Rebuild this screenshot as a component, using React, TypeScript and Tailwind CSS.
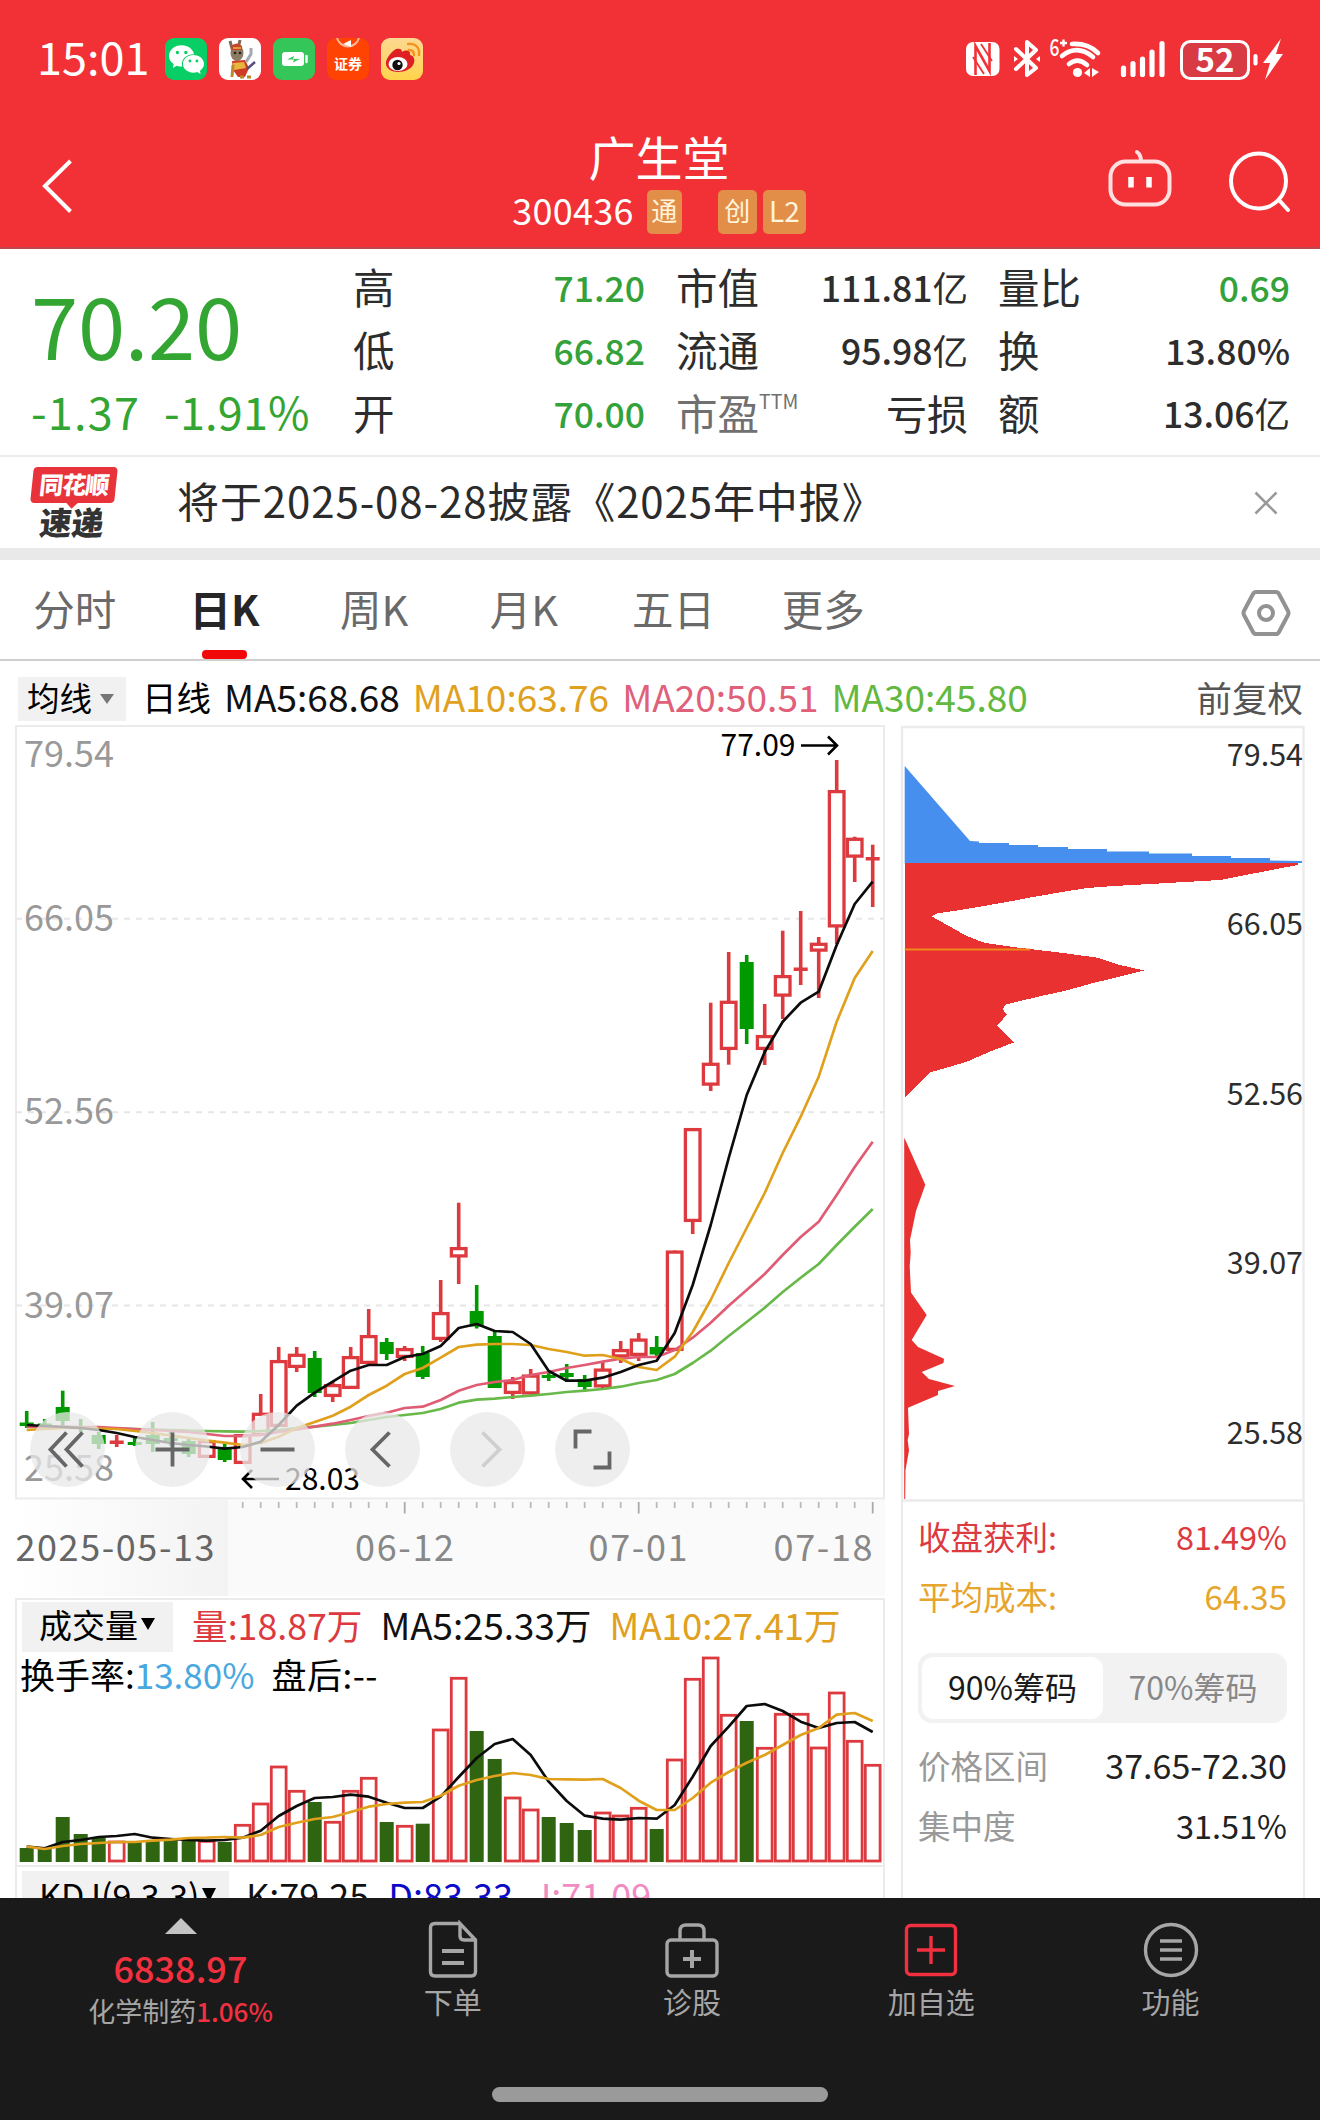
import type { ReactNode } from "react";
import { IoLogoWechat } from "react-icons/io5";

// [type, high, bodyTop, bodyBottom, low] in chart units, r = up, g = down
type Candle = ["r" | "g", number, number, number, number];

const X0 = 26.7;
const STEP = 18;
const cx = (i: number) => X0 + STEP * i;

const candles: Candle[] = [
  ["g", 1411, 1422.5, 1426, 1428],
  ["g", 1419, 1423.5, 1426.5, 1428],
  ["g", 1390.7, 1407, 1421, 1427],
  ["g", 1419, 1426, 1429, 1432],
  ["g", 1432, 1435, 1444, 1449],
  ["r", 1435, 1441.5, 1443, 1447],
  ["g", 1437, 1442, 1445, 1446],
  ["g", 1422, 1435, 1444, 1452],
  ["g", 1432, 1438, 1441, 1446],
  ["g", 1438, 1441, 1454, 1457],
  ["r", 1440, 1440, 1458, 1458],
  ["g", 1443, 1447, 1460, 1462],
  ["r", 1434, 1434, 1464, 1464],
  ["r", 1394, 1412.7, 1436, 1436],
  ["r", 1347, 1360, 1427, 1427],
  ["r", 1347, 1353.7, 1368, 1372],
  ["g", 1351, 1358, 1393, 1397],
  ["r", 1382, 1384, 1397, 1402],
  ["r", 1347, 1356, 1389, 1389],
  ["r", 1309, 1335, 1364, 1364],
  ["g", 1338, 1342, 1354, 1360],
  ["r", 1346, 1348, 1358, 1361],
  ["g", 1346, 1353, 1377, 1379],
  ["r", 1280, 1312, 1340, 1342],
  ["r", 1202.7, 1247, 1257.5, 1284],
  ["g", 1285, 1311, 1326.5, 1328.5],
  ["g", 1332, 1336, 1388, 1388],
  ["r", 1377, 1381, 1394, 1399],
  ["r", 1369, 1374.5, 1394.5, 1394.5],
  ["g", 1371, 1375, 1378, 1381],
  ["g", 1364, 1373, 1377, 1382],
  ["g", 1375, 1379, 1387, 1390],
  ["r", 1362, 1368.5, 1387.5, 1389],
  ["r", 1341, 1349, 1357.5, 1363],
  ["r", 1333, 1338.5, 1356, 1361],
  ["g", 1336, 1347, 1354.5, 1356],
  ["r", 1250.5, 1250.5, 1351, 1351],
  ["r", 1128, 1128, 1222, 1234],
  ["r", 1002.7, 1062.7, 1085.7, 1091],
  ["r", 952, 1000.7, 1050, 1064.7],
  ["g", 955, 962, 1029, 1044],
  ["r", 1004, 1035, 1050, 1065],
  ["r", 930.7, 975, 996.7, 1019],
  ["r", 911, 968.5, 970, 985],
  ["r", 937, 942.7, 951.7, 998],
  ["r", 760, 790, 927.5, 944],
  ["r", 836.7, 837.7, 857.7, 882],
  ["r", 844.7, 858, 859.5, 907],
];

const ma5 = [
  1425, 1426, 1427, 1428, 1430, 1433, 1437, 1440, 1443, 1445, 1446.5, 1448.7, 1447, 1441.7, 1425, 1405.7,
  1392.7, 1381.7, 1370.7, 1365, 1365, 1357, 1354, 1346, 1328, 1324, 1331, 1332, 1344, 1371, 1380.7, 1380.7,
  1377.7, 1372, 1365, 1360.7, 1333, 1285, 1225, 1158, 1095, 1052, 1021.7, 1002.7, 991.7, 945, 904, 881.7,
];
const ma10 = [
  1430, 1429, 1428, 1428, 1428.5, 1429, 1431, 1433, 1435.5, 1438, 1440.7, 1442.7, 1445, 1443, 1436.7, 1428,
  1422, 1415.7, 1406.7, 1395, 1385.7, 1374, 1368, 1357.7, 1347, 1344.7, 1344, 1344, 1345, 1349, 1352, 1355.7,
  1355, 1359, 1367, 1370, 1356.7, 1332, 1300, 1263, 1228, 1193, 1153, 1116.7, 1076.7, 1021.7, 978, 951,
];
const ma20 = [
  1426.7, 1426.7, 1426.7, 1427, 1427, 1428, 1429, 1430, 1431, 1432, 1434, 1436, 1436, 1435, 1432, 1429.3,
  1426.7, 1423.7, 1420, 1416, 1412.7, 1408, 1406.7, 1400, 1390.7, 1385, 1382, 1380, 1375, 1372, 1368, 1365,
  1361.7, 1358.7, 1357, 1357, 1350, 1337.7, 1322.7, 1305.7, 1290, 1274, 1255, 1237, 1221.7, 1195, 1167, 1141.7,
];
const ma30 = [
  1427, 1427, 1427.3, 1427.6, 1428, 1428.5, 1429, 1429.5, 1430, 1430.7, 1431, 1431.4, 1431.7, 1431, 1430, 1428,
  1426.7, 1425, 1423, 1420, 1417, 1415, 1413, 1409, 1402.7, 1399.7, 1398.7, 1397, 1395.7, 1394, 1392, 1390.7,
  1389, 1386.7, 1383, 1380, 1374, 1363, 1350.7, 1336, 1322, 1307.7, 1292, 1277.7, 1264, 1245, 1226.7, 1209,
];

const volumeTops = [
  1848, 1849, 1817, 1834, 1838, 1840.7, 1841, 1841, 1840, 1841, 1840, 1842, 1824, 1802.7, 1765.7, 1790,
  1802, 1821, 1790, 1777, 1822, 1825, 1823.7, 1728.7, 1677, 1731, 1759, 1796.7, 1808.7, 1817, 1823, 1830,
  1811.7, 1814.7, 1807, 1829, 1758.7, 1678, 1656.7, 1714, 1721, 1747, 1713, 1713, 1746.7, 1691.7, 1740, 1764,
];
const volMa5 = [
  1846.7, 1848.3, 1842, 1840, 1837, 1836, 1834, 1837.7, 1839, 1840, 1840.7, 1840, 1837.7, 1830.7, 1816, 1806,
  1798, 1797, 1794.7, 1796.7, 1802.7, 1808, 1808, 1796.7, 1777, 1758, 1744, 1739, 1755, 1781.7, 1801, 1815.7,
  1818.7, 1819.7, 1818, 1818.7, 1805, 1776.7, 1746, 1726.7, 1706, 1704, 1711, 1721.7, 1728, 1723, 1722, 1732,
];
const volMa10 = [
  1846.7, 1849, 1846, 1844, 1843, 1842, 1842, 1840.7, 1839.7, 1838, 1837.7, 1837, 1837.7, 1835, 1827, 1822.7,
  1819, 1817, 1812, 1806.7, 1804, 1802.7, 1802, 1795.7, 1785.7, 1780, 1776, 1773, 1775, 1779, 1779.3, 1779.7,
  1779, 1788, 1800.7, 1810, 1810, 1798, 1782.7, 1772, 1762.7, 1755, 1745, 1735, 1728, 1714.7, 1713, 1721,
];

const line = (ys: number[]) => ys.map((y, i) => `${cx(i).toFixed(1)},${y}`).join(" ");

const RED = "#dc3a3f";
const GREEN = "#009a00";

function StatusBar() {
  return (
    <div className="flex h-[118px] items-center pl-[37px] pr-[36px] text-white">
      <span className="w-[128px] pb-[7px] text-[45px] leading-none">15:01</span>
      <div className="flex gap-3">
        <div className="flex h-[42px] w-[42px] items-center justify-center rounded-[9px] bg-[#08cf65]">
          <IoLogoWechat className="h-[35px] w-[35px]" />
        </div>
        <svg className="h-[42px] w-[42px] rounded-[9px] bg-white" viewBox="0 0 42 42">
          <path d="M11 3l3 11M21 2l-2 9" stroke="#7c6a58" strokeWidth="3" />
          <ellipse cx="18" cy="15" rx="6.5" ry="8" fill="#8d7a62" />
          <path d="M12 8q6-5 11 0l0 4-10 0z" fill="#c8452c" />
          <path d="M14 10h8" stroke="#e8b63b" strokeWidth="1.500" />
          <circle cx="16" cy="15" r="1.3" fill="#222" />
          <circle cx="21" cy="15" r="1.3" fill="#222" />
          <path d="M13 23l13-1 4 8-4 9h-7l-5-7z" fill="#cf3c25" />
          <path d="M14 25l11-1 2 6-12 2z" fill="#e8b63b" />
          <path d="M27 24l5-8v-6" fill="none" stroke="#a3a8b5" strokeWidth="3" />
          <path d="M28 31l8-7" stroke="#5c4a7a" strokeWidth="2.400" />
          <path d="M14 27l-1 12M21 39h4M28 39h4" stroke="#b98a2c" strokeWidth="3" />
        </svg>
        <svg className="h-[42px] w-[42px] rounded-[9px] bg-[#34c659]" viewBox="0 0 42 42">
          <rect x="9" y="14" width="22" height="14" rx="3" fill="#fff" />
          <path d="M33.500 18v6" stroke="#fff" strokeWidth="2.400" strokeLinecap="round" />
          <path d="M14 21.500l7-3.500-1 3h7l-7 3.500 1-3z" fill="#34c659" />
        </svg>
        <div className="relative flex h-[42px] w-[42px] justify-center overflow-hidden rounded-[9px] bg-[#fe4303]">
          <svg className="absolute left-0 top-0 h-[16px] w-[42px]" viewBox="0 0 42 16" fill="none">
            <path d="M10 0a11.5 12 0 0 0 22 0" stroke="#ffb59a" strokeWidth="2" />
            <path d="M16 6l8-4v7z" fill="#fff" />
          </svg>
          <span className="mt-[18px] text-[14px] font-bold leading-none">证券</span>
        </div>
        <svg className="h-[42px] w-[42px] rounded-[9px] bg-gradient-to-b from-[#fdd890] to-[#ffd348]" viewBox="0 0 42 42">
          <path
            d="M15 11c4-1 6 0 6 3 5-3 9-1 8 3 4 1 5 4 4 8-2 6-9 9-16 9-7 0-13-4-12-10 1-5 6-11 10-13z"
            fill="#de1f24"
          />
          <ellipse cx="17" cy="26" rx="9.5" ry="7" fill="#fff" />
          <circle cx="16.500" cy="27" r="5.200" fill="#111" />
          <circle cx="18" cy="25.500" r="1.600" fill="#fff" />
          <path d="M28 12c4 0 5 2 5 5M27 6c8-1 12 4 11 11" fill="none" stroke="#f5931e" strokeWidth="2.400" strokeLinecap="round" />
        </svg>
      </div>
      <svg className="ml-auto h-[66px] w-[320px]" viewBox="964 26 320 66" fill="none" stroke="#fff">
        {/* nfc */}
        <rect x="966" y="42" width="33.500" height="34" rx="7" fill="#fff" stroke="none" />
        <path d="M975.500 75V46L989.500 71V43" stroke="#f23136" strokeWidth="2.600" />
        <path d="M981 44l11 17M973 57l11 17" stroke="#f23136" strokeWidth="1.800" />
        {/* bluetooth */}
        <path d="M1016 49l20 19-9 7V42l9 8-20 19" strokeWidth="4" strokeLinejoin="round" strokeLinecap="round" />
        <path d="M1014 56v6l4-3zM1040 56v6l-4-3z" fill="#fff" stroke="none" />
        {/* wifi */}
        <path d="M1072 44q16-1 26 9M1062 56q15-12 31 1M1069 64q9-7 18 1" strokeWidth="4.600" strokeLinecap="round" />
        <circle cx="1077.500" cy="72.500" r="4.600" fill="#fff" stroke="none" />
        <path d="M1084 73l6-5v9zM1092 68v9l7-5z" fill="#fff" stroke="none" />
        <text x="1049.500" y="56" fontSize="23" fontWeight="500" textLength="10" lengthAdjust="spacingAndGlyphs" fill="#fff" stroke="none">
          6
        </text>
        <path d="M1060 43h7M1063.500 39.500v7" strokeWidth="2.400" />
        {/* signal */}
        <path d="M1123.500 68v6.500M1133 63.500v11M1142.500 59v15.500M1152 52v22.500M1162 43.500v31" strokeWidth="5.200" strokeLinecap="round" />
        {/* battery */}
        <rect x="1181.500" y="41.500" width="67" height="37" rx="9" strokeWidth="3" fill="#d93b45" />
        <text x="1215" y="72" fontSize="33" fontWeight="700" textAnchor="middle" fill="#fff" stroke="none">
          52
        </text>
        <path d="M1255.500 56v7.500" strokeWidth="4.200" strokeLinecap="round" />
        <path d="M1281 38.500l-18 24.500h7l-5 17 18-26h-7z" fill="#fff" stroke="none" />
      </svg>
    </div>
  );
}

function Tag({ children, className }: { children: ReactNode; className: string }) {
  return (
    <span className={`flex h-11 items-center justify-center rounded-[5px] bg-[#e28e48] pb-[4px] leading-none text-[#fff4dc] ${className}`}>
      {children}
    </span>
  );
}

function TitleBar() {
  return (
    <div className="flex h-[131px] justify-between pl-[38px] pr-[28px]">
      <svg className="mt-[38px] h-[60px] w-[40px]" viewBox="38 156 40 60" fill="none" stroke="#fff">
        <path d="M70.500 161L45 186l25.500 25.500" strokeWidth="4" />
      </svg>
      <div className="ml-[134px] mt-[12px] flex flex-col items-center text-white">
        <h1 className="text-[47px] leading-[52px]">广生堂</h1>
        <div className="mt-[8px] flex items-center">
          <span className="pb-[6px] text-[36px] leading-none tracking-[0.300px]">300436</span>
          <Tag className="ml-[13px] w-[35px] text-[26px]">通</Tag>
          <Tag className="ml-[36px] w-[39px] text-[26px]">创</Tag>
          <Tag className="ml-[6px] w-[43px] text-[28px]">L2</Tag>
        </div>
      </div>
      <svg className="mt-[29px] h-[70px] w-[186px]" viewBox="1106 148 186 70" fill="none" stroke="#fff" strokeLinecap="round">
        <rect x="1110.500" y="162.500" width="59" height="43" rx="15" strokeWidth="4" stroke="#ffdfe0" />
        <path d="M1137 153q4 3 4 9" strokeWidth="4" stroke="#ffdfe0" />
        <path d="M1131 178v10.500M1149 178v10.500" strokeWidth="5.500" strokeLinecap="butt" />
        <circle cx="1258.500" cy="182" r="27.500" strokeWidth="4" />
        <path d="M1279 201l9 10" strokeWidth="4" />
      </svg>
    </div>
  );
}

function Stat({ label, value, green, sup }: { label: string; value: string; green?: boolean; sup?: string }) {
  return (
    <div className="flex h-[63px] items-center justify-between">
      <span className={`flex text-[41.500px] leading-none ${sup ? "text-[#707070]" : "text-[#2d2d2d]"}`}>
        {label}
        {sup && <sup className="top-0 text-[19.500px] leading-[18px]">{sup}</sup>}
      </span>
      <span
        className={`leading-none ${value === "亏损" ? "text-[41px]" : "text-[35.500px] font-medium"} ${green ? "text-[#33a23a]" : "text-[#2d2d2d]"}`}
      >
        {value.endsWith("亿") ? (
          <>
            {value.slice(0, -1)}
            <span className="font-normal">亿</span>
          </>
        ) : (
          value
        )}
      </span>
    </div>
  );
}

function QuotePanel() {
  return (
    <section className="flex h-[208px] border-b-2 border-[#ececec] pt-[6px]">
      <div className="w-[353px] pl-[31px] text-[#33a532]">
        <div className="mt-[25px] text-[85px] leading-[86px] tracking-[-0.300px]">70.20</div>
        <div className="mt-[20px] flex gap-[24px] text-[45px] leading-[50px]">
          <span className="tracking-[1.200px]">-1.37</span>
          <span className="tracking-[0.200px]">-1.91%</span>
        </div>
      </div>
      <div className="w-[292px]">
        <Stat label="高" value="71.20" green />
        <Stat label="低" value="66.82" green />
        <Stat label="开" value="70.00" green />
      </div>
      <div className="ml-[31px] w-[292px]">
        <Stat label="市值" value="111.81亿" />
        <Stat label="流通" value="95.98亿" />
        <Stat label="市盈" sup="TTM" value="亏损" />
      </div>
      <div className="ml-[30px] w-[292px]">
        <Stat label="量比" value="0.69" green />
        <Stat label="换" value="13.80%" />
        <Stat label="额" value="13.06亿" />
      </div>
    </section>
  );
}

function NewsRow() {
  return (
    <section className="flex h-[103px] items-center border-b-[12px] border-[#e9e9e9] pl-[30px] pr-[42px]">
      <div className="flex w-[88px] flex-col items-center">
        <div className="relative flex h-[36px] w-[84px] -skew-x-6 items-center justify-center rounded-[4px] bg-[#e8333a] pb-[2px]">
          <span className="text-[24px] font-black leading-none tracking-[-1px] text-white">同花顺</span>
          <span className="absolute -bottom-[4px] left-[38px] h-[8px] w-[8px] rotate-45 bg-[#e8333a]" />
        </div>
        <span className="mr-[4px] mt-[2px] -skew-x-6 text-[32px] font-black leading-[33px] text-[#333]">速递</span>
      </div>
      <p className="ml-[59px] pb-[6px] text-[42px] leading-none tracking-[0.900px] text-[#2b2b2b]">将于2025-08-28披露《2025年中报》</p>
      <svg className="ml-auto h-[24px] w-[24px]" viewBox="0 0 24 24" stroke="#999" strokeWidth="2.600">
        <path d="M1.500 1.500l21 21M22.500 1.500l-21 21" />
      </svg>
    </section>
  );
}

const tabs = ["分时", "日K", "周K", "月K", "五日", "更多"];

function Tabs() {
  return (
    <nav className="flex h-[101px] items-stretch border-b-2 border-[#cfcfcf] pr-[29px]">
      {tabs.map((tab) => (
        <div key={tab} className="flex w-[149.700px] flex-col items-center justify-end">
          <span
            className={
              tab === "日K"
                ? "mb-[4px] text-[41.500px] font-bold leading-[76px] text-[#262626]"
                : "mb-[4px] text-[41.500px] leading-[76px] text-[#6a6a6a]"
            }
          >
            {tab}
          </span>
          <span className={`h-[9px] w-[45px] rounded-[4px] ${tab === "日K" ? "bg-[#f20808]" : ""}`} />
        </div>
      ))}
      <svg className="ml-auto mt-[28px] h-[50px] w-[50px]" viewBox="0 0 50 50" fill="none" stroke="#929292" strokeWidth="4">
        <path d="M15 4h20q2 0 3 2l9 17q1 2 0 4l-9 17q-1 2-3 2H15q-2 0-3-2L3 27q-1-2 0-4l9-17q1-2 3-2z" />
        <circle cx="25" cy="25" r="7" />
      </svg>
    </nav>
  );
}

function IndicatorRow() {
  return (
    <div className="flex h-[64px] items-center whitespace-nowrap pl-[18px] pr-[17px] pt-[12px] text-[37px] leading-none">
      <div className="flex h-[44px] w-[108px] items-center bg-[#f1f1f1] pb-[3px] pl-[9px] text-[32.500px] text-black">
        均线
        <svg className="ml-[8px] mt-[3px] h-[10px] w-[14px]" viewBox="0 0 14 10">
          <path d="M0 0h14L7 10z" fill="#777" />
        </svg>
      </div>
      <div className="flex flex-1 items-center pb-[5px]">
        <span className="ml-[16px] text-[34.500px] text-black">日线</span>
        <span className="ml-[13px] text-[#111]">MA5:68.68</span>
        <span className="ml-[13px] text-[#e0a020]">MA10:63.76</span>
        <span className="ml-[13px] text-[#e0607a]">MA20:50.51</span>
        <span className="ml-[13px] text-[#62b840]">MA30:45.80</span>
        <span className="ml-auto text-[35.500px] text-[#555]">前复权</span>
      </div>
    </div>
  );
}

const gridLabels = [
  { text: "79.54", y: 767 },
  { text: "66.05", y: 930.5 },
  { text: "52.56", y: 1123.5 },
  { text: "39.07", y: 1317.5 },
  { text: "25.58", y: 1481 },
];

function KLineChart() {
  return (
    <svg className="block h-[873px] w-[900px] overflow-visible" viewBox="0 725 900 873">
      <defs>
        <linearGradient id="axisFade">
          <stop offset="0" stopColor="#ffffff" />
          <stop offset="0.5" stopColor="#f9f9f9" />
          <stop offset="1" stopColor="#f3f3f3" />
        </linearGradient>
      </defs>
      <rect x="228" y="1500" width="657" height="96" fill="#fafafa" />
      <rect x="15" y="1500" width="213" height="96" fill="url(#axisFade)" />
      <rect x="16" y="726" width="868" height="772.500" fill="none" stroke="#ebebeb" strokeWidth="2" />
      {[918.7, 1112.200, 1305.500].map((y) => (
        <line key={y} x1="16" x2="884" y1={y} y2={y} stroke="#e6e6e6" strokeWidth="2" strokeDasharray="6 6" />
      ))}
      {gridLabels.map((l) => (
        <text key={l.text} x="24" y={l.y} fontSize="36" fill="#999">
          {l.text}
        </text>
      ))}

      {candles.map(([type, high, top, bottom, low], i) => {
        const x = cx(i);
        if (type === "g") {
          return (
            <g key={i} fill={GREEN}>
              <rect x={x - 1.8} y={high} width="3.600" height={low - high} />
              <rect x={x - 7} y={top} width="14" height={bottom - top} />
            </g>
          );
        }
        if (bottom - top < 3) {
          return (
            <g key={i} fill={RED}>
              <rect x={x - 1.8} y={high} width="3.600" height={low - high} />
              <rect x={x - 7} y={top - 1} width="14" height="3.500" />
            </g>
          );
        }
        return (
          <g key={i}>
            <rect x={x - 1.8} y={high} width="3.600" height={low - high} fill={RED} />
            <rect x={x - 7.3} y={top + 1.6} width="14.600" height={bottom - top - 3.2} fill="#fff" stroke={RED} strokeWidth="3.300" />
          </g>
        );
      })}

      <g fill="none" strokeWidth="2.700" strokeLinejoin="round">
        <polyline points={line(ma30)} stroke="#68b84a" />
        <polyline points={line(ma20)} stroke="#e05c74" />
        <polyline points={line(ma10)} stroke="#e0a01c" />
        <polyline points={line(ma5)} stroke="#0c0c0c" />
      </g>

      <g fontSize="30" fill="#000">
        <text x="720.500" y="756">77.09</text>
        <text x="285" y="1489.500">28.03</text>
      </g>
      <g fill="none" stroke="#000" strokeWidth="2.600">
        <path d="M801 745.500h35M828 736.500l9 9-9 9" />
        <path d="M279 1479h-36M252 1470l-9 9 9 9" />
      </g>

      {candles.slice(12).map((_, k) => {
        const i = k + 12;
        const major = i === 21 || i === 34 || i === 47;
        return (
          <line key={i} x1={cx(i)} x2={cx(i)} y1="1502" y2={major ? 1513.5 : 1508} stroke={major ? "#aaa" : "#bbb"} strokeWidth="1.800" />
        );
      })}
      <g fontSize="36" fill="#888">
        <text x="15.500" y="1561" fill="#666" textLength="199">
          2025-05-13
        </text>
        <text x="355" y="1561" textLength="99">
          06-12
        </text>
        <text x="588.500" y="1561" textLength="99">
          07-01
        </text>
        <text x="773.500" y="1561" textLength="99">
          07-18
        </text>
      </g>
    </svg>
  );
}

const controls = [
  { name: "fast-back", d: "M-1 -17L-17 0L-1 17M15 -17L-1 0L15 17", color: "#666" },
  { name: "zoom-in", d: "M-17 0H17M0 -17V17", color: "#666" },
  { name: "zoom-out", d: "M-17 0H17", color: "#666" },
  { name: "back", d: "M7 -17L-10 0L7 17", color: "#666" },
  { name: "forward", d: "M-5 -17L12 0L-5 17", color: "#cfcfcf" },
  { name: "expand", d: "M-17 -1V-18H-1M17 2V18H1", color: "#666" },
];

function ChartControls() {
  return (
    <div className="absolute left-[30px] top-[687px] flex gap-[30px]">
      {controls.map((c) => (
        <button key={c.name} aria-label={c.name} className="h-[75px] w-[75px] rounded-full bg-[#e8e8e8]/75">
          <svg className="h-[75px] w-[75px]" viewBox="-37.500 -37.500 75 75" fill="none" stroke={c.color} strokeWidth="3.800">
            <path d={c.d} />
          </svg>
        </button>
      ))}
    </div>
  );
}

function VolumePanel() {
  return (
    <div className="relative ml-[15px] h-[269px] w-[870px] border-2 border-[#ebebeb] bg-white">
      <svg className="absolute -left-[2px] -top-[2px] h-[268px] w-[870px]" viewBox="15 1598 870 268">
        {volumeTops.map((top, i) => {
          const x = cx(i);
          return candles[i][0] === "g" ? (
            <rect key={i} x={x - 7} y={top} width="14" height={1862 - top} fill="#2f6411" />
          ) : (
            <rect key={i} x={x - 7.4} y={top + 1.3} width="14.800" height={1861 - top - 1.3} fill="#fff" stroke={RED} strokeWidth="2.800" />
          );
        })}
        <g fill="none" strokeWidth="2.700" strokeLinejoin="round">
          <polyline points={line(volMa5)} stroke="#0c0c0c" />
          <polyline points={line(volMa10)} stroke="#e0a01c" />
        </g>
      </svg>
      <div className="relative whitespace-nowrap pl-[5px] leading-none">
        <div className="flex items-center pt-[2px] text-[36.700px]">
          <div className="flex h-[50px] w-[151px] items-center bg-[#f1f1f1] pb-[5px] pl-[17px] text-[33px] text-black">
            成交量
            <svg className="ml-[3px] h-[12px] w-[14px] -translate-y-[1px]" viewBox="0 0 14 12">
              <path d="M0 0h14L7 12z" />
            </svg>
          </div>
          <span className="ml-[19px] pb-[5px] text-[35.700px] text-[#dc3a3f]">量:18.87万</span>
          <span className="ml-[18px] pb-[5px] text-[#111]">MA5:25.33万</span>
          <span className="ml-[18px] pb-[5px] text-[#e0a020]">MA10:27.41万</span>
        </div>
        <div className="-ml-[2px] mt-[4px] flex text-[35px] text-black">
          换手率:<span className="text-[#4aa8e0]">13.80%</span>
          <span className="ml-[17px] tracking-[0.500px]">盘后:--</span>
        </div>
      </div>
    </div>
  );
}

function KdjRow() {
  return (
    <div className="ml-[15px] flex h-[31px] w-[870px] overflow-hidden border-x-2 border-[#ebebeb] pl-[5px] text-[36px] leading-[46px]">
      <div className="mt-[4px] flex h-[50px] w-[207px] shrink-0 bg-[#f1f1f1] pl-[17px] text-[34px] leading-[47px] text-black">
        KDJ(9,3,3)
        <svg className="ml-[2px] mt-[17px] h-[14px] w-[14px]" viewBox="0 0 14 14">
          <path d="M0 0h14L7 14z" />
        </svg>
      </div>
      <span className="ml-[17px] mt-[4px] text-[#111]">K:79.25</span>
      <span className="ml-[19px] mt-[4px] text-[#0a0ac8]">D:83.33</span>
      <span className="ml-[19px] mt-[4px] text-[#f08cc2]">J:71.09</span>
    </div>
  );
}

const blueChips =
  "904.700,766 970,841 979,841.500 979,843 1009,843 1009,845 1038,845 1038,847 1068,847 1068,849 1107,849 1107,851.500 1149,851.500 1149,853.500 1192,853.500 1192,856 1231,856 1231,858 1270,858 1270,860.500 1302,861 1302,863 904.700,863.400";
const redChips =
  "904.700,863.400 1298,863.400 1298,865 1286.700,867 1253,873.600 1220,880 1185,882 1150,884 1114,886 1086.700,888 1060,892.400 1033,897 1006.700,902 980,906.700 955,910.800 936.700,913.400 931.700,916.400 950,926.600 966.700,936 985,943 1013,947 1030,949 1063,953 1098,957.800 1120,965 1144,970.500 1120,976.600 1093,983 1066.700,990.400 1036.700,997 1005,1004.700 1003,1009.800 1007,1014.400 997,1026 1014,1042.400 990,1051.600 966.700,1061.800 930,1072.500 904.700,1098";
const lowChips =
  "904.700,1138.400 925.300,1184.800 916,1211 910,1240 910.700,1253 909.700,1266 911,1292.400 926.700,1315 911.700,1340 918,1347 944,1358.800 943.500,1363 921.700,1372 929,1379 955,1386 938,1391 938,1395 908,1407.800 909,1434 907.700,1440 909,1450.600 905.500,1470 905.200,1499 904.200,1499 904.200,1138.400";

const chipLabels = [
  { text: "79.54", y: 765.5 },
  { text: "66.05", y: 935 },
  { text: "52.56", y: 1104.5 },
  { text: "39.07", y: 1274 },
  { text: "25.58", y: 1443.5 },
];

function ChipRow({ label, value, className, valueClass }: { label: string; value: string; className: string; valueClass: string }) {
  return (
    <div className={`flex h-[60px] items-center justify-between leading-none ${className}`}>
      <span className="text-[32.500px]">{label}</span>
      <span className={valueClass}>{value}</span>
    </div>
  );
}

function ChipPanel() {
  return (
    <aside className="w-[420px]">
      <svg className="block h-[777px] w-[420px]" viewBox="900 725 420 777">
        <path d="M902 1502V727H1303.500V1502M902 1500.500H1303.500" fill="none" stroke="#ebebeb" strokeWidth="2.400" />
        <polygon points={blueChips} fill="#468fee" />
        <polygon points={redChips} fill="#e93131" shapeRendering="crispEdges" />
        <polygon points={lowChips} fill="#e93131" />
        <line x1="904.700" x2="1030" y1="949.500" y2="949.500" stroke="#f08a1c" strokeWidth="2" />
        {chipLabels.map((l) => (
          <text key={l.text} x="1303" y={l.y} fontSize="30.500" textAnchor="end" fill="#2d2d2d">
            {l.text}
          </text>
        ))}
      </svg>
      <div className="ml-[1px] h-[396px] w-[404px] border-x-2 border-[#ebebeb] pl-[15px] pr-[16px] pt-[4px]">
        <ChipRow label="收盘获利:" value="81.49%" className="text-[#dc3a3f]" valueClass="text-[32.500px]" />
        <ChipRow label="平均成本:" value="64.35" className="text-[#e6a52c]" valueClass="text-[33px]" />
        <div className="mt-[27px] flex h-[70px] rounded-[14px] bg-[#f2f2f2] p-[4px] text-[32px] leading-none">
          <div className="flex w-[181px] items-center justify-center rounded-[12px] bg-white pb-[5px] text-[#1a1a1a]">90%筹码</div>
          <div className="flex flex-1 items-center justify-center pb-[5px] text-[#888]">70%筹码</div>
        </div>
        <div className="mt-[12px]">
          <ChipRow label="价格区间" value="37.65-72.30" className="text-[#999]" valueClass="text-[34px] text-[#222]" />
          <ChipRow label="集中度" value="31.51%" className="text-[#999]" valueClass="text-[32.500px] text-[#222]" />
        </div>
      </div>
    </aside>
  );
}

function NavItem({ label, color, children }: { label: string; color: string; children: ReactNode }) {
  return (
    <div className="flex w-[239.300px] flex-col items-center">
      <svg className="mt-[22px] h-[60px] w-[60px]" viewBox="0 0 60 60" fill="none" stroke={color} strokeWidth="3.400">
        {children}
      </svg>
      <span className="mt-[3px] text-[29px] leading-[36px] text-[#a6a6a6]">{label}</span>
    </div>
  );
}

function BottomNav() {
  return (
    <footer className="flex h-[222px] flex-col bg-[#1a1a1a]">
      <div className="flex h-[189px]">
        <div className="flex w-[333px] flex-col items-center pl-[28px] leading-none">
          <svg className="mt-[20px] h-[16px] w-[32px]" viewBox="0 0 32 16">
            <path d="M16 0L32 16H0z" fill="#c4c4c4" />
          </svg>
          <span className="mt-[15px] text-[36px] font-medium text-[#f2303f]">6838.97</span>
          <span className="mt-[12px] text-[27px] text-[#a6a6a6]">
            化学制药<span className="text-[26px] font-medium text-[#f2303f]">1.06%</span>
          </span>
        </div>
        <NavItem label="下单" color="#a6a6a6">
          <path d="M37 3.500H12q-4.500 0-4.500 4.500v43.500q0 4.500 4.500 4.500h36q4.500 0 4.500-4.500V20L37 3.500V16q0 4 4 4h11.500" />
          <path d="M19 31h22M19 43h22" strokeWidth="3.800" />
        </NavItem>
        <NavItem label="诊股" color="#a6a6a6">
          <rect x="5" y="20" width="50" height="36" rx="4" />
          <path d="M18 20V11q0-6 6-6h12q6 0 6 6v9" />
          <path d="M30 30v18M21 39h18" strokeWidth="4" />
        </NavItem>
        <NavItem label="加自选" color="#f2303f">
          <rect x="5.500" y="5.500" width="49" height="49" rx="4" />
          <path d="M30 16v28M16 30h28" />
        </NavItem>
        <NavItem label="功能" color="#a6a6a6">
          <circle cx="30" cy="30" r="25.500" />
          <path d="M19 21h22M19 30h22M19 39h22" />
        </NavItem>
      </div>
      <div className="mx-auto h-[15px] w-[336px] rounded-full bg-[#9a9a9a]" />
    </footer>
  );
}

export default function App() {
  return (
    <div className="h-[2120px] w-[1320px] overflow-hidden bg-white font-['Noto_Sans_CJK_SC',sans-serif]">
      <header className="h-[249px] border-b-2 border-[#c0474c] bg-[#f23136]">
        <StatusBar />
        <TitleBar />
      </header>
      <QuotePanel />
      <NewsRow />
      <Tabs />
      <IndicatorRow />
      <div className="flex h-[1173px]">
        <div className="relative w-[900px]">
          <KLineChart />
          <ChartControls />
          <VolumePanel />
          <KdjRow />
        </div>
        <ChipPanel />
      </div>
      <BottomNav />
    </div>
  );
}
